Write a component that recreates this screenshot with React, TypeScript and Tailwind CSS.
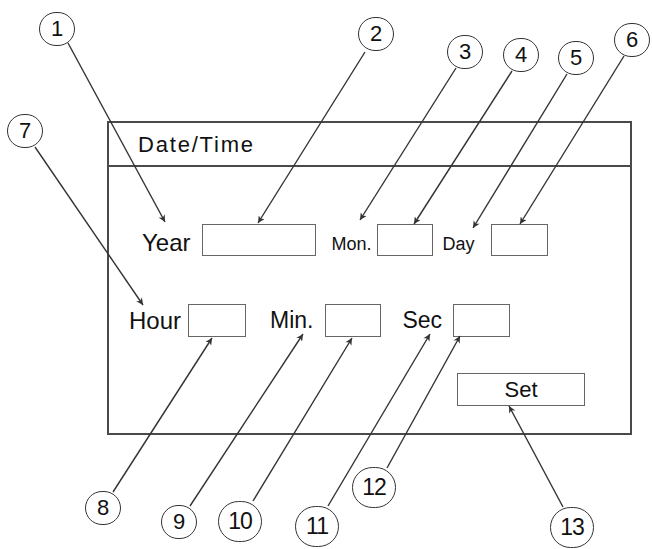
import React from "react";

type Callout = {
  n: number;
  cx: number;
  cy: number;
  from: [number, number];
  to: [number, number];
};

const callouts: Callout[] = [
  { n: 1, cx: 57, cy: 29, from: [68, 43], to: [165, 222] },
  { n: 2, cx: 376, cy: 34, from: [365, 52], to: [258, 223] },
  { n: 3, cx: 465, cy: 52, from: [456, 68], to: [360, 220] },
  { n: 4, cx: 521, cy: 55, from: [512, 71], to: [414, 224] },
  { n: 5, cx: 576, cy: 58, from: [567, 74], to: [473, 228] },
  { n: 6, cx: 632, cy: 40, from: [624, 56], to: [520, 224] },
  { n: 7, cx: 25, cy: 131, from: [35, 147], to: [143, 305] },
  { n: 8, cx: 103, cy: 508, from: [113, 492], to: [212, 338] },
  { n: 9, cx: 179, cy: 522, from: [190, 506], to: [303, 334] },
  { n: 10, cx: 240, cy: 521, from: [253, 501], to: [352, 338] },
  { n: 11, cx: 317, cy: 526, from: [328, 506], to: [430, 334] },
  { n: 12, cx: 374, cy: 487, from: [387, 468], to: [460, 336] },
  { n: 13, cx: 572, cy: 527, from: [563, 507], to: [509, 406] },
];

const font = { fontFamily: '"Liberation Sans", Arial, sans-serif' };

const Field = ({ w, h = 33 }: { w: number; h?: number }) => (
  <div
    className="border-[1.5px] border-[#666] bg-white"
    style={{ width: w, height: h }}
  />
);

export default function App() {
  return (
    <div
      className="relative w-[652px] h-[549px] bg-white text-[#111] overflow-hidden"
      style={font}
    >
      {/* dialog */}
      <div className="absolute left-[107px] top-[121px] w-[525px] h-[314px] border-2 border-[#4a4a4a] flex flex-col">
        <div className="h-[44px] border-b-2 border-[#4a4a4a] flex items-center pl-[29px] text-[22px] tracking-[1.8px]">
          Date/Time
        </div>
        <div className="flex-1 flex flex-col">
          <div className="flex items-center mt-[57px] pl-[33px]">
            <span className="text-[24px] leading-none mt-[6px]">Year</span>
            <div className="ml-[11px]">
              <Field w={114} h={32} />
            </div>
            <span className="ml-[16px] text-[18px] leading-none mt-[8px]">Mon.</span>
            <div className="ml-[5px]">
              <Field w={56} h={32} />
            </div>
            <span className="ml-[10px] text-[18px] leading-none mt-[8px]">Day</span>
            <div className="ml-[16px]">
              <Field w={57} h={32} />
            </div>
          </div>
          <div className="flex items-center mt-[48px] pl-[20px]">
            <span className="text-[24px] leading-none">Hour</span>
            <div className="ml-[7px]">
              <Field w={58} />
            </div>
            <span className="ml-[24px] text-[23px] leading-none">Min.</span>
            <div className="ml-[12px]">
              <Field w={56} />
            </div>
            <span className="ml-[21px] text-[23px] leading-none">Sec</span>
            <div className="ml-[11px]">
              <Field w={57} />
            </div>
          </div>
          <div className="flex mt-[36px] pl-[348px]">
            <button className="w-[128px] h-[33px] border-[1.5px] border-[#666] bg-white text-[22px] leading-none flex items-center justify-center">
              Set
            </button>
          </div>
        </div>
      </div>

      {/* leader lines */}
      <svg
        className="absolute inset-0 pointer-events-none"
        width={652}
        height={549}
        viewBox="0 0 652 549"
      >
        <defs>
          <marker
            id="tip"
            viewBox="0 0 10 10"
            refX="10"
            refY="5"
            markerWidth="9"
            markerHeight="7"
            markerUnits="userSpaceOnUse"
            orient="auto"
          >
            <path d="M0 0 L10 5 L0 10 L3 5 Z" fill="#333" />
          </marker>
        </defs>
        {callouts.map((c) => (
          <line
            key={c.n}
            x1={c.from[0]}
            y1={c.from[1]}
            x2={c.to[0]}
            y2={c.to[1]}
            stroke="#333"
            strokeWidth={1.4}
            markerEnd="url(#tip)"
          />
        ))}
      </svg>

      {/* numbered circles */}
      {callouts.map((c) => {
        const two = c.n >= 10;
        const w = two ? 44 : 36;
        const h = two ? 41 : 34;
        return (
          <div
            key={c.n}
            className={`absolute flex items-center justify-center rounded-full border-[1.5px] border-[#333] bg-white leading-none ${
              two ? "text-[23px] tracking-[-1px]" : "text-[22px]"
            }`}
            style={{ left: c.cx - w / 2, top: c.cy - h / 2, width: w, height: h }}
          >
            {c.n}
          </div>
        );
      })}
    </div>
  );
}
